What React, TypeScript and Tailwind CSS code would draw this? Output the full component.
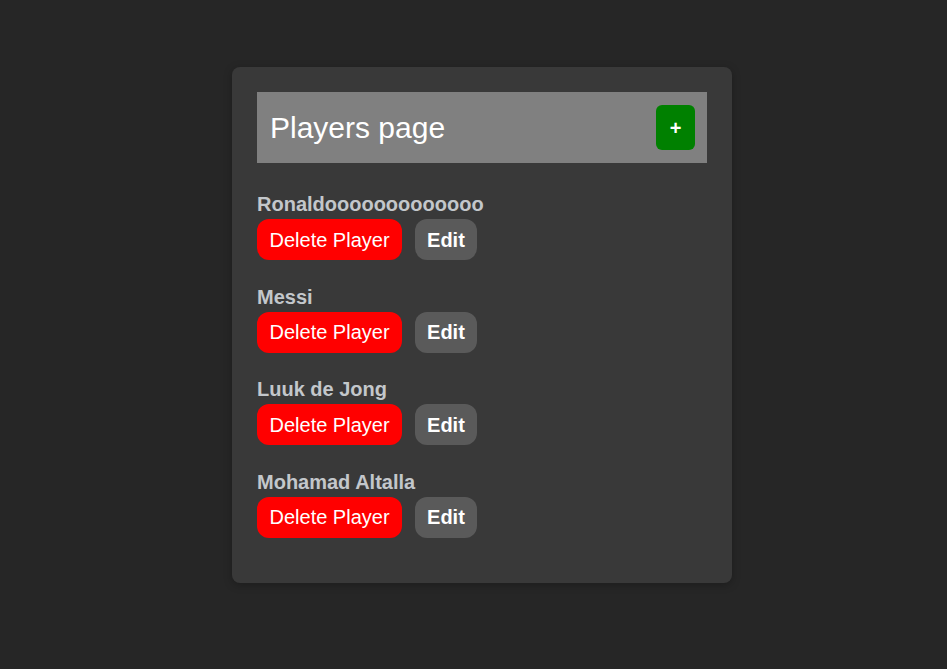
const players = [
  'Ronald' + 'ooooo' + 'ooooo' + 'ooo',
  'Messi',
  'Luuk de Jong',
  'Mohamad Altalla',
];

function PlayerRow({ name }: { name: string }) {
  return (
    <div className="flex flex-col gap-[3px]">
      <div className="text-[20px] font-bold leading-[23px] text-[#c3c7cb]">{name}</div>
      <div className="flex items-center gap-[13px]">
        <button
          type="button"
          className="h-[41px] rounded-[12px] bg-[#ff0000] px-[12.5px] text-[20px] text-white"
        >
          Delete Player
        </button>
        <button
          type="button"
          className="h-[41px] rounded-[12px] bg-[#5a5a5a] px-[12px] text-[20px] font-bold text-white"
        >
          Edit
        </button>
      </div>
    </div>
  );
}

export default function App() {
  return (
    <div
      className="flex min-h-screen justify-center bg-[#262626] pl-[17px] pt-[67px]"
      style={{ fontFamily: '"Liberation Sans", Arial, sans-serif' }}
    >
      <div className="h-fit w-[500px] rounded-[8px] bg-[#393939] px-[25px] pb-[45px] pt-[25px] shadow-[0_2px_8px_rgba(0,0,0,0.25)]">
        <div className="flex h-[71px] items-center justify-between bg-[#808080] pl-[13px] pr-[12px]">
          <h1 className="text-[30px] text-white">Players page</h1>
          <button
            type="button"
            className="flex h-[45px] w-[39px] items-center justify-center rounded-[6px] bg-[#008000] text-[20px] font-bold text-white"
          >
            +
          </button>
        </div>

        <div className="mt-[30px] flex flex-col gap-[25.5px]">
          {players.map((p) => (
            <PlayerRow key={p} name={p} />
          ))}
        </div>
      </div>
    </div>
  );
}
